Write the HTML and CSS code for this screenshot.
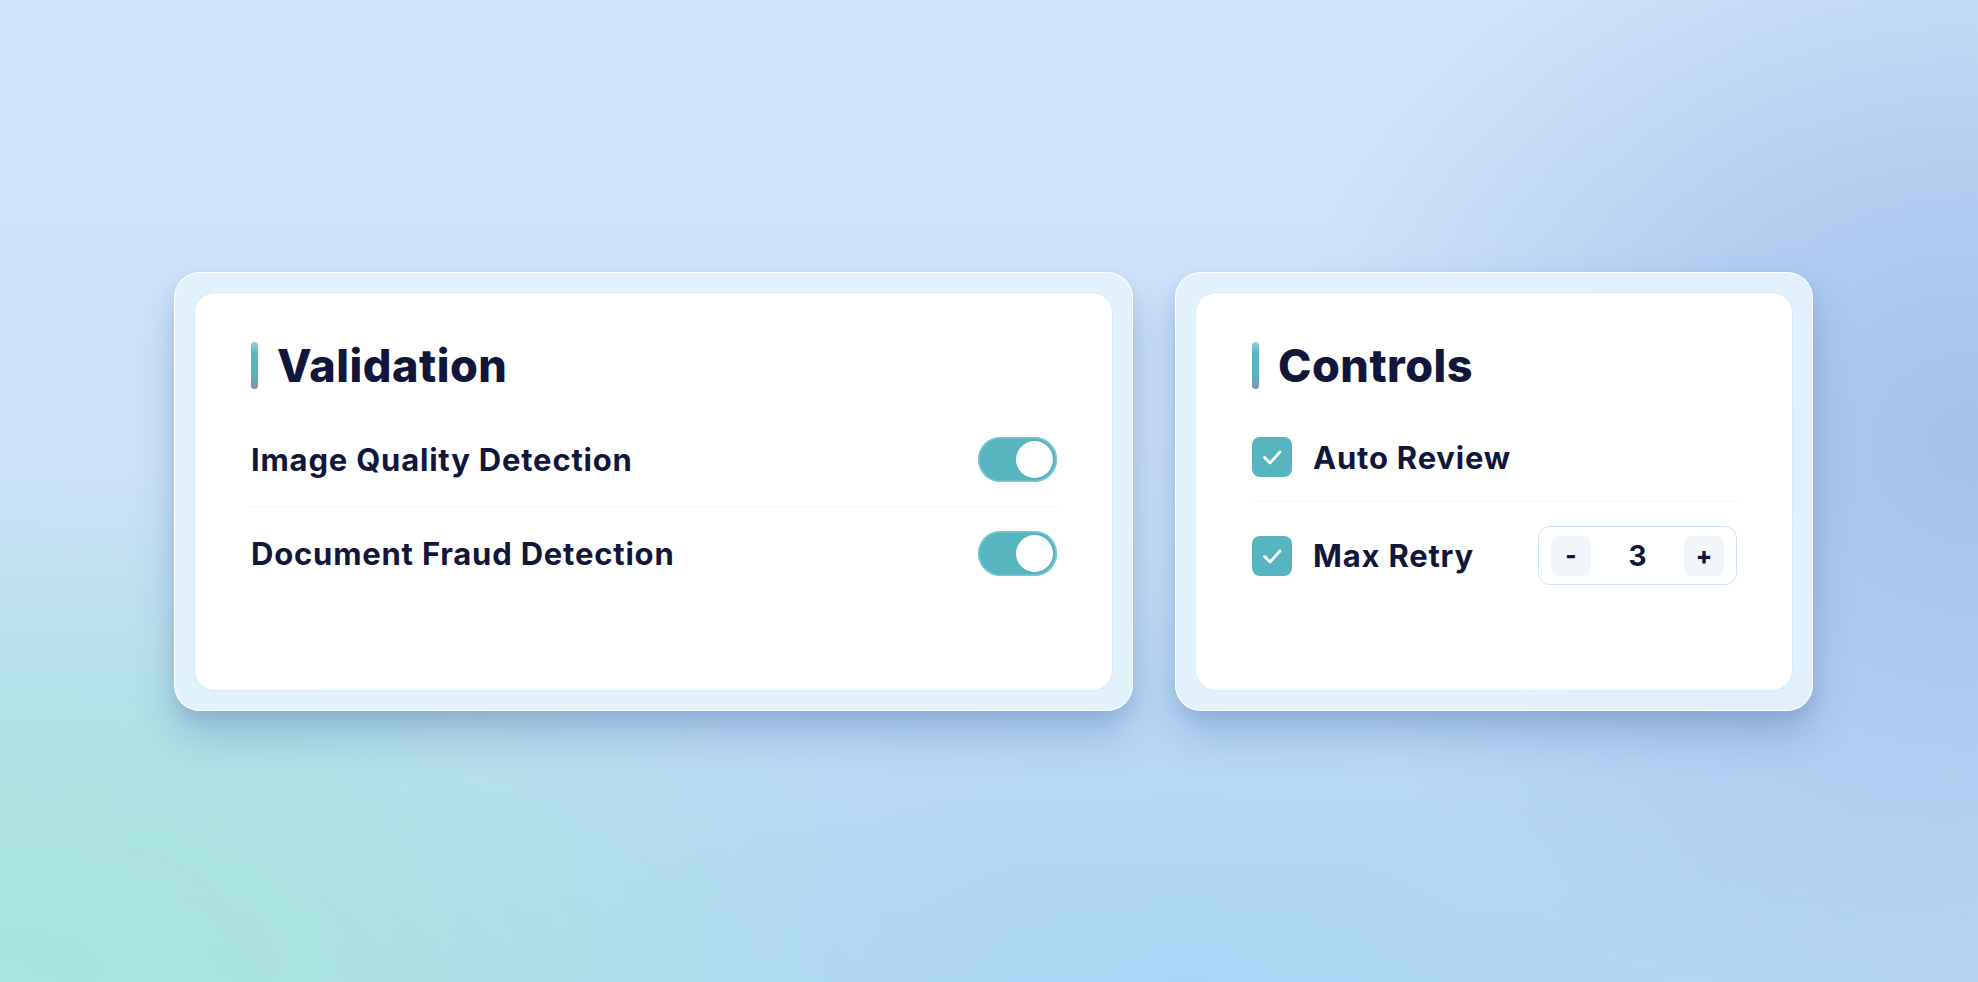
FILE: index.html
```html
<!DOCTYPE html>
<html lang="en">
<head>
<meta charset="utf-8">
<title>Settings</title>
<link rel="stylesheet" href="styles.css">
</head>
<body>
<main class="stage">
  <section class="card card-validation">
    <div class="card-inner">
      <h2 class="card-title"><span class="accent"></span>Validation</h2>
      <div class="row row-divided">
        <span class="row-label">Image Quality Detection</span>
        <span class="toggle on"><span class="knob"></span></span>
      </div>
      <div class="row">
        <span class="row-label">Document Fraud Detection</span>
        <span class="toggle on"><span class="knob"></span></span>
      </div>
    </div>
  </section>
  <section class="card card-controls">
    <div class="card-inner">
      <h2 class="card-title"><span class="accent"></span>Controls</h2>
      <div class="row row-divided">
        <span class="check-group">
          <span class="checkbox"><svg viewBox="0 0 40 40" width="40" height="40"><path d="M12.5 20.5l5.5 5.5 10-11" fill="none" stroke="#fff" stroke-width="2.8" stroke-linecap="round" stroke-linejoin="round"/></svg></span>
          <span class="row-label">Auto Review</span>
        </span>
      </div>
      <div class="row">
        <span class="check-group">
          <span class="checkbox"><svg viewBox="0 0 40 40" width="40" height="40"><path d="M12.5 20.5l5.5 5.5 10-11" fill="none" stroke="#fff" stroke-width="2.8" stroke-linecap="round" stroke-linejoin="round"/></svg></span>
          <span class="row-label">Max Retry</span>
        </span>
        <span class="stepper">
          <span class="step-btn">-</span>
          <span class="step-value">3</span>
          <span class="step-btn">+</span>
        </span>
      </div>
    </div>
  </section>
</main>
</body>
</html>
```

FILE: styles.css
```css
* { box-sizing: border-box; }
html, body { margin: 0; height: 100%; }
body {
  width: 1978px;
  height: 982px;
  overflow: hidden;
  font-family: Inter, "Noto Sans", sans-serif;
  color: #11163a;
  background:
    radial-gradient(ellipse 900px 520px at 0% 100%, #a9e4df 0%, rgba(169,228,223,0.85) 35%, rgba(169,228,223,0) 100%),
    radial-gradient(ellipse 700px 600px at 100% 45%, #a2c2ec 0%, rgba(162,194,236,0.65) 45%, rgba(162,194,236,0) 100%),
    radial-gradient(ellipse 900px 400px at 60% 100%, #acd6f6 0%, rgba(172,214,246,0) 100%),
    linear-gradient(180deg, #d0e5fb 0%, #cde3fa 45%, #b8d8f4 100%);
}
.stage {
  display: flex;
  gap: 42px;
  padding: 272px 0 0 174px;
  align-items: flex-start;
}
.card {
  background: rgba(228, 243, 253, 0.92);
  border: 1.5px solid rgba(255,255,255,0.95);
  border-radius: 26px;
  padding: 20px;
  box-shadow: 0 24px 40px rgba(70, 110, 170, 0.32), 0 8px 14px rgba(70,110,170,0.14);
}
.card-validation { width: 959px; height: 439px; }
.card-controls { width: 638px; height: 439px; }
.card-inner {
  background: #ffffff;
  border-radius: 20px;
  height: 100%;
  padding: 49px 55px 0 56px;
  box-shadow: 0 0 0 1px rgba(205, 228, 248, 0.6);
}
.card-title {
  display: flex;
  align-items: center;
  gap: 19px;
  margin: 0 0 24px;
  height: 47px;
  font-size: 45px;
  font-weight: 800;
  letter-spacing: 0.5px;
  line-height: 1;
}
.accent {
  width: 7px;
  height: 47px;
  border-radius: 4px;
  background: linear-gradient(180deg, #8fd3dc 0%, #56b5c0 25%, #56b5c0 70%, #8a8ea8 100%);
  flex: none;
}
.row {
  display: flex;
  align-items: center;
  justify-content: space-between;
  padding: 24px 0;
}
.row-divided {
  border-bottom: 1.5px dotted #e6eef6;
}
.row-label {
  font-size: 31px;
  font-weight: 700;
  letter-spacing: 0.8px;
}
.toggle {
  width: 79px;
  height: 45px;
  border-radius: 23px;
  background: #56b5c0;
  box-shadow: inset 0 0 0 1.5px #7cc8d1;
  display: flex;
  align-items: center;
  justify-content: flex-end;
  padding-right: 4px;
  flex: none;
}
.knob {
  width: 37px;
  height: 37px;
  border-radius: 50%;
  background: #ffffff;
}
.check-group {
  display: flex;
  align-items: center;
  gap: 21px;
}
.checkbox {
  width: 40px;
  height: 40px;
  border-radius: 8px;
  background: #56b5c0;
  display: flex;
  align-items: center;
  justify-content: center;
  flex: none;
}
.stepper {
  width: 199px;
  height: 59px;
  border: 1.5px solid #cfe2f4;
  border-radius: 12px;
  display: flex;
  align-items: center;
  justify-content: space-between;
  padding: 0 12px;
}
.step-btn {
  width: 40px;
  height: 40px;
  border-radius: 8px;
  background: #f1f6fb;
  display: flex;
  align-items: center;
  justify-content: center;
  font-size: 24px;
  font-weight: 800;
}
.step-value {
  font-size: 28px;
  font-weight: 700;
}
```
